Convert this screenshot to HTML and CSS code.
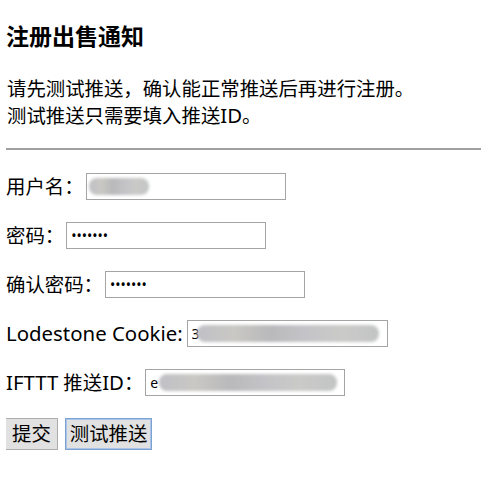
FILE: index.html
```html
<!DOCTYPE html>
<html lang="zh">
<head>
<meta charset="utf-8">
<title>注册出售通知</title>
<link rel="stylesheet" href="styles.css">
</head>
<body>
<h3 class="title">注册出售通知</h3>
<p class="intro">请先测试推送，确认能正常推送后再进行注册。<br>测试推送只需要填入推送<span class="latin">ID</span>。</p>
<hr class="rule">
<form class="form">
  <div class="row"><label>用户名：</label><span class="field"><input class="input" type="text" value="" ><span class="blur" style="left:3px;width:60px"></span></span></div>
  <div class="row"><label>密码：</label><span class="field"><input class="input" type="password" value="1234567"></span></div>
  <div class="row"><label>确认密码：</label><span class="field"><input class="input" type="password" value="1234567"></span></div>
  <div class="row"><label><span class="latin">Lodestone Cookie:</span></label><span class="field"><input class="input wide" type="text" value="3                                                                 s"><span class="blur" style="left:10px;width:182px"></span></span></div>
  <div class="row"><label><span class="latin">IFTTT</span> 推送<span class="latin">ID</span>：</label><span class="field"><input class="input" type="text" value="e                                                                  \"><span class="blur" style="left:14px;width:178px"></span></span></div>
  <div class="buttons"><button type="button" class="btn">提交</button><button type="button" class="btn focus">测试推送</button></div>
</form>
</body>
</html>
```
FILE: styles.css
```css
html, body {
  background: #fff;
}
body {
  margin: 0 6px;
  font-family: "Noto Sans", "Noto Sans CJK SC", sans-serif;
  font-size: 19.4px;
  color: #000;
}
.latin {
  font-size: 20.4px;
}
.title {
  font-size: 23px;
  font-weight: bold;
  margin: 22px 0 0 0;
  line-height: 28px;
}
.intro {
  margin: 26px 0 0 1px;
  line-height: 26px;
}
.rule {
  border: 0;
  border-top: 2px solid #a0a0a0;
  margin: 19px -6px 0 0;
}
.form {
  display: flex;
  flex-direction: column;
  gap: 22px;
  margin-top: 23px;
}
.row {
  display: flex;
  align-items: center;
  height: 27px;
}
.row label {
  margin-right: 2px;
  line-height: 24px;
  white-space: pre;
}
.row label .latin + * {
  margin-left: 0;
}
.field {
  position: relative;
  display: inline-block;
}
.input {
  box-sizing: border-box;
  width: 200px;
  height: 27px;
  border: 1px solid #a4a4a4;
  padding: 1px 4px;
  font-family: "Noto Sans", "Noto Sans CJK SC", sans-serif;
  font-size: 14px;
  margin: 0;
  display: block;
  background: #fff;
  color: #000;
}
.input.wide {
  width: 201px;
  margin-left: 2px;
}
.blur {
  position: absolute;
  top: 5px;
  height: 17px;
  background: linear-gradient(90deg, #c0c0c6 0%, #c9c8c4 20%, #b9b9bb 40%, #c4c4c8 60%, #cacac8 80%, #c2c4c4 100%);
  filter: blur(1.5px);
  border-radius: 8px;
}
.wide + .blur {
  left: 12px !important;
}
.buttons {
  display: flex;
  gap: 7px;
  margin: 0 0 0 -1px;
}
.btn {
  font-family: "Noto Sans", "Noto Sans CJK SC", sans-serif;
  font-size: 19.4px;
  background: #e1e1e1;
  border: 1px solid #adadad;
  padding: 0 6px;
  height: 32px;
  line-height: 28px;
  margin: 0;
  color: #000;
}
.btn.focus {
  border: 1px solid #7da2ce;
  box-shadow: inset 0 0 0 1px #a9c4ec;
  padding: 0 4px;
}
```
